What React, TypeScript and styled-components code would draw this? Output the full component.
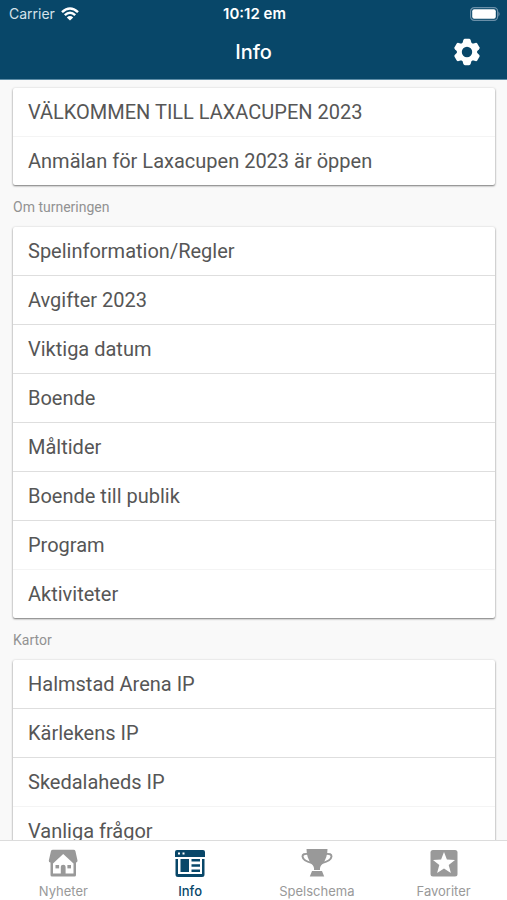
import React from "react";
import styled, { createGlobalStyle } from "styled-components";

const GlobalStyle = createGlobalStyle`
  * { box-sizing: border-box; }
  body { margin: 0; background: #f9f9f9; font-family: Roboto, sans-serif; }
`;

const Screen = styled.div`
  display: flex;
  flex-direction: column;
  height: 100vh;
  overflow: hidden;
`;

const TopBar = styled.header`
  flex: none;
  background: #084769;
  color: #fff;
  border-bottom: 1px solid #5d8da7;
`;

const StatusBar = styled.div`
  display: grid;
  grid-template-columns: 1fr auto 1fr;
  align-items: center;
  height: 27px;
  padding: 0 7px 0 9px;
  font: 400 14px/27px Inter, sans-serif;
`;

const Carrier = styled.span`
  display: flex;
  align-items: center;
  gap: 6px;
  color: #d5e2ea;
`;

const Clock = styled.time`
  font-weight: 600;
  font-size: 15px;
`;

const Battery = styled.svg`
  justify-self: end;
`;

const TitleBar = styled.div`
  display: grid;
  grid-template-columns: 1fr auto 1fr;
  align-items: center;
  height: 52px;
  padding: 0 24px 2px;
`;

const Title = styled.h1`
  grid-column: 2;
  margin: 0;
  font: 500 20px/28px Inter, sans-serif;
`;

const SettingsButton = styled.button`
  justify-self: end;
  display: flex;
  padding: 0;
  border: 0;
  background: none;
  color: inherit;
  cursor: pointer;
`;

const Content = styled.main`
  flex: 1;
  min-height: 0;
  overflow-y: auto;
  scrollbar-width: none;
  padding: 8px 12px 8px 13px;
`;

const SectionTitle = styled.h2`
  margin: 0;
  padding: 12px 0 10px;
  color: #929292;
  font-size: 14px;
  font-weight: 400;
  line-height: 20px;
`;

const Card = styled.ul`
  margin: 0;
  padding: 0;
  list-style: none;
  background: #fff;
  border-radius: 2px;
  box-shadow: 0 1px 2px rgba(0, 0, 0, 0.5), 0 0 3px rgba(0, 0, 0, 0.08);
`;

const CardItem = styled.li`
  border-bottom: 1px solid #dedede;
  &:nth-last-child(2) { border-bottom-color: #f4f4f4; }
  &:last-child { border-bottom: 0; }
`;

const RowLink = styled.a`
  display: block;
  padding: 10px 15px;
  color: #565656;
  font-size: 20px;
  line-height: 28px;
  text-decoration: none;
`;

const TabBar = styled.nav`
  flex: none;
  display: grid;
  grid-template-columns: repeat(4, 1fr);
  height: 60px;
  background: #fff;
  border-top: 1px solid #dcdcdc;
`;

const Tab = styled.a<{ $active?: boolean }>`
  display: flex;
  flex-direction: column;
  align-items: center;
  gap: 4px;
  padding-top: 6px;
  color: ${(p) => (p.$active ? "#084769" : "#999")};
  font: ${(p) => (p.$active ? 500 : 400)} 13px/16px Inter, sans-serif;
  text-decoration: none;
`;

const WifiIcon = () => (
  <svg width="18" height="14" viewBox="0 0 18 14" fill="none" stroke="#fff" strokeWidth="2.5" aria-hidden="true">
    <path d="M1 5.2Q9-2.2 17 5.2" />
    <path d="M3.8 8.2Q9 3.4 14.2 8.2" />
    <path d="M9 13.6L5.8 10.4Q9 7.8 12.2 10.4Z" fill="#fff" stroke="none" />
  </svg>
);

const BatteryIcon = () => (
  <Battery width="31" height="14" viewBox="0 0 31 14" aria-label="Battery full">
    <rect x="1.6" y="0.7" width="27" height="12.6" rx="3.6" fill="none" stroke="#6a8fa8" strokeWidth="1.2" />
    <rect x="3.2" y="2.2" width="23.6" height="9.6" rx="2" fill="#fff" />
    <path d="M29.4 4.5Q32 7 29.4 9.5Z" fill="#6a8fa8" />
  </Battery>
);

const GearIcon = () => (
  <svg width="32" height="32" viewBox="0 0 32 32" fill="currentColor" aria-hidden="true">
    <circle cx="16" cy="16" r="7.7" fill="none" stroke="currentColor" strokeWidth="5" />
    {[0, 60, 120, 180, 240, 300].map((angle) => (
      <path key={angle} transform={`rotate(${angle} 16 16)`} d="M11 9L12.3 4.2Q12.7 2.8 14 2.8H18Q19.3 2.8 19.7 4.2L21 9Z" />
    ))}
  </svg>
);

const HomeIcon = () => (
  <svg width="32" height="32" viewBox="0 0 32 32" fill="currentColor" aria-hidden="true">
    <path d="M6 2.8H26.5Q28 2.8 28.4 4L30.5 13.5Q30.5 15.5 29 15.5V28Q29 29.5 27.5 29.5H5Q3.5 29.5 3.5 28V15.5Q1.5 15.5 1.8 13.5L4 4Q4.3 2.8 6 2.8Z" />
    <path fill="#fff" d="M16.2 7L26.5 16.5V26.5H6V16.5Z" />
    <rect x="8.5" y="18" width="3.6" height="3.4" />
    <rect x="20.4" y="18" width="3.6" height="3.4" />
    <path d="M13.8 27V19.8Q13.8 17.8 16.2 17.8T18.6 19.8V27Z" />
  </svg>
);

const InfoIcon = () => (
  <svg width="32" height="32" viewBox="0 0 32 32" fill="currentColor" fillRule="evenodd" aria-hidden="true">
    <path d="M3 3H29Q31 3 31 5V10H1V5Q1 3 3 3ZM4 5.5V7.5H6V5.5ZM8.5 5.5V7.5H10.5V5.5Z" />
    <path d="M1.5 12H4V27H28V12H30.5V27.5Q30.5 30 28 30H4Q1.5 30 1.5 27.5Z" />
    <path d="M6.5 12H15V25H6.5ZM17.5 12H26V14.5H17.5ZM17.5 17.2H26V19.8H17.5ZM17.5 22.4H26V25H17.5Z" />
  </svg>
);

const TrophyIcon = () => (
  <svg width="32" height="32" viewBox="0 0 32 32" fill="currentColor" aria-hidden="true">
    <path d="M5.5 2H26.5Q26.5 11 21.5 17Q18.5 19.5 19 23H13Q13.5 19.5 10.5 17Q5.5 11 5.5 2Z" />
    <path d="M7 7Q1.5 6.3 1.5 9.5Q2 14 11 16M25 7Q30.5 6.3 30.5 9.5Q30 14 21 16" fill="none" stroke="currentColor" strokeWidth="2" />
    <path d="M11 24H21L23.2 29.5H8.8Z" />
  </svg>
);

const StarIcon = () => (
  <svg width="32" height="32" viewBox="0 0 32 32" aria-hidden="true">
    <rect x="2.5" y="3" width="27" height="26.5" rx="2.5" fill="currentColor" />
    <path fill="#fff" d="M16 5L18.9 12.6 27 13 20.7 18.1 22.9 26 16 21.5 9.1 26 11.3 18.1 5 13 13.1 12.6Z" />
  </svg>
);

const sections = [
  { items: ["VÄLKOMMEN TILL LAXACUPEN 2023", "Anmälan för Laxacupen 2023 är öppen"] },
  {
    title: "Om turneringen",
    items: [
      "Spelinformation/Regler",
      "Avgifter 2023",
      "Viktiga datum",
      "Boende",
      "Måltider",
      "Boende till publik",
      "Program",
      "Aktiviteter",
    ],
  },
  { title: "Kartor", items: ["Halmstad Arena IP", "Kärlekens IP", "Skedalaheds IP", "Vanliga frågor"] },
];

const tabs = [
  { label: "Nyheter", Icon: HomeIcon },
  { label: "Info", Icon: InfoIcon, active: true },
  { label: "Spelschema", Icon: TrophyIcon },
  { label: "Favoriter", Icon: StarIcon },
];

export default function App() {
  return (
    <Screen>
      <GlobalStyle />
      <TopBar>
        <StatusBar>
          <Carrier>
            Carrier
            <WifiIcon />
          </Carrier>
          <Clock>10:12 em</Clock>
          <BatteryIcon />
        </StatusBar>
        <TitleBar>
          <Title>Info</Title>
          <SettingsButton type="button" aria-label="Inställningar">
            <GearIcon />
          </SettingsButton>
        </TitleBar>
      </TopBar>
      <Content>
        {sections.map(({ title, items }, i) => (
          <section key={i}>
            {title && <SectionTitle>{title}</SectionTitle>}
            <Card>
              {items.map((item) => (
                <CardItem key={item}>
                  <RowLink href="#">{item}</RowLink>
                </CardItem>
              ))}
            </Card>
          </section>
        ))}
      </Content>
      <TabBar>
        {tabs.map(({ label, Icon, active }) => (
          <Tab key={label} href="#" $active={active} aria-current={active ? "page" : undefined}>
            <Icon />
            {label}
          </Tab>
        ))}
      </TabBar>
    </Screen>
  );
}
